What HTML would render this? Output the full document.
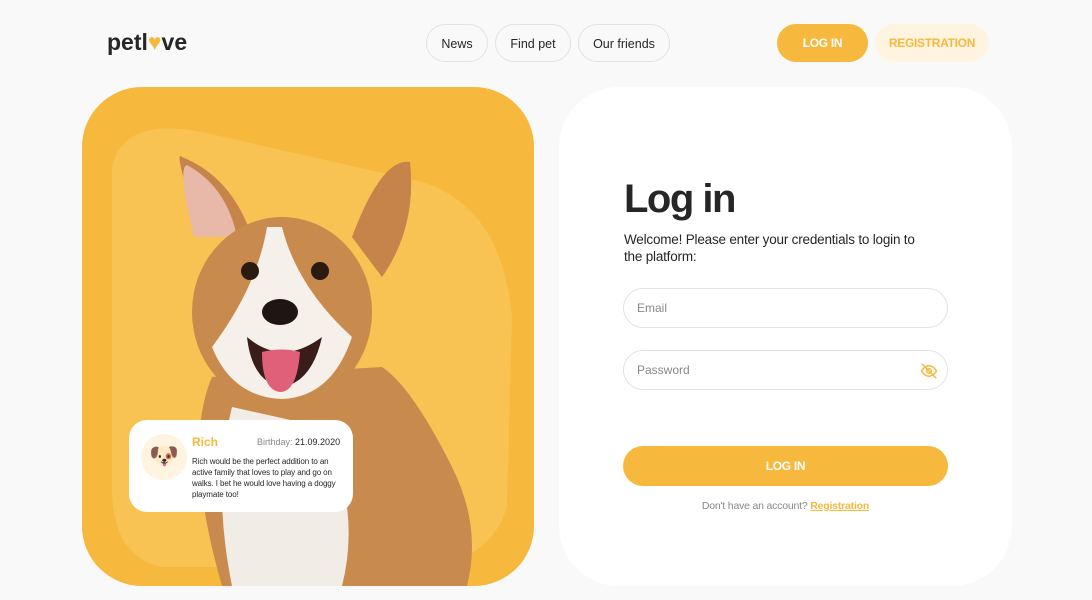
<!DOCTYPE html>
<html><head><meta charset="utf-8"><style>
*{box-sizing:border-box;margin:0;padding:0}
body{width:1092px;height:600px;background:#f9f9f9;font-family:"Liberation Sans",sans-serif;color:#262626;position:relative;overflow:hidden}
.logo{position:absolute;left:107px;top:29px;font-size:23px;font-weight:bold;letter-spacing:0px;color:#262626}
.logo span{color:#f6b83d}
.nav a{position:absolute;top:24px;height:38px;border:1px solid #e3e3e3;border-radius:30px;font-size:12.5px;line-height:38px;text-align:center;color:#262626;text-decoration:none}
.btn{position:absolute;top:24px;height:38px;border-radius:30px;font-size:12px;font-weight:bold;line-height:38px;text-align:center;letter-spacing:-0.3px}
.left{position:absolute;left:82px;top:87px;width:452px;height:499px;background:#f6b83d;border-radius:60px;overflow:hidden}
.right{position:absolute;left:559px;top:87px;width:453px;height:499px;background:#fff;border-radius:60px}
h1{position:absolute;left:65px;top:90px;font-size:40px;font-weight:bold;letter-spacing:-1.5px}
.sub{position:absolute;left:65px;top:144px;width:300px;font-size:13.5px;line-height:17px;letter-spacing:-0.2px}
.inp{position:absolute;left:64px;width:325px;height:40px;border:1px solid #e3e3e3;border-radius:30px;font-size:12px;color:#888;padding-left:13px;line-height:38px}
.lb{position:absolute;left:64px;top:359px;width:325px;height:40px;border-radius:30px;background:#f6b83d;color:#fff;font-size:12px;font-weight:bold;text-align:center;line-height:40px;letter-spacing:-0.3px}
.reg{position:absolute;left:0;width:453px;top:413px;text-align:center;font-size:10.5px;color:#888;letter-spacing:-0.2px}
.reg b{color:#f6b83d;text-decoration:underline}
.card{position:absolute;left:129px;top:420px;width:224px;height:92px;background:#fff;border-radius:18px}
</style></head><body>
<div class="logo">petl<span>♥</span>ve</div>
<div class="nav"><a style="left:426px;width:62px">News</a><a style="left:495px;width:76px">Find pet</a><a style="left:578px;width:92px">Our friends</a></div>
<div class="btn" style="left:777px;width:91px;background:#f6b83d;color:#fff">LOG IN</div>
<div class="btn" style="left:875px;width:114px;background:#fff4df;color:#f6b83d">REGISTRATION</div>
<div class="left">
<svg width="452" height="499" viewBox="0 0 452 499">
<path d="M30 80 Q40 30 120 45 L340 95 Q420 120 430 230 L425 420 Q410 470 350 480 L80 480 Q30 470 30 400 Z" fill="#f8c352"/>
<path d="M130 290 Q100 360 140 499 L385 499 Q400 440 370 380 Q330 300 300 280 Z" fill="#c98a4e"/>
<path d="M150 320 Q130 400 150 499 L260 499 Q280 420 240 340 Z" fill="#f1ece5"/>
<path d="M120 150 Q90 60 100 70 Q150 90 170 150 Z" fill="#c6844a"/>
<path d="M270 150 Q300 70 328 75 Q335 140 300 190 Z" fill="#c6844a"/>
<path d="M112 150 Q95 80 105 78 Q145 100 155 150 Z" fill="#e8b8a8"/>
<ellipse cx="200" cy="225" rx="90" ry="95" fill="#c98a4e"/>
<path d="M185 140 L200 140 Q215 200 270 250 Q250 310 200 312 Q150 310 130 260 Q175 200 185 140Z" fill="#f5f0ea"/>
<circle cx="168" cy="184" r="9" fill="#2a1a10"/><circle cx="238" cy="184" r="9" fill="#2a1a10"/>
<ellipse cx="198" cy="225" rx="18" ry="13" fill="#1e1612"/>
<path d="M165 250 Q200 280 240 250 Q230 295 200 300 Q170 295 165 250Z" fill="#3a1d1a"/>
<path d="M180 265 Q200 260 218 265 Q215 305 198 305 Q180 303 180 265Z" fill="#e0607a"/>
</svg>
</div>
<div class="card">
<div style="position:absolute;left:12px;top:14px;width:46px;height:46px;border-radius:50%;background:#fff4df;text-align:center;line-height:46px;font-size:24px">🐶</div>
<div style="position:absolute;left:63px;top:15px;font-size:12px;font-weight:bold;color:#f6b83d">Rich</div>
<div style="position:absolute;left:128px;top:17px;font-size:9px;color:#888">Birthday: <span style="color:#262626">21.09.2020</span></div>
<div style="position:absolute;left:63px;top:36px;width:150px;font-size:8px;line-height:11px;color:#262626;letter-spacing:-0.1px">Rich would be the perfect addition to an active family that loves to play and go on walks. I bet he would love having a doggy playmate too!</div>
</div>
<div class="right">
<h1>Log in</h1>
<div class="sub">Welcome! Please enter your credentials to login to the platform:</div>
<div class="inp" style="top:201px">Email</div>
<div class="inp" style="top:263px">Password
<svg style="position:absolute;right:9px;top:11px" width="18" height="18" viewBox="0 0 24 24" fill="none" stroke="#f6b83d" stroke-width="2" stroke-linecap="round"><path d="M2 12s4-7 10-7 10 7 10 7-4 7-10 7S2 12 2 12z"/><circle cx="12" cy="12" r="3"/><path d="M3 3l18 18"/></svg></div>
<div class="lb">LOG IN</div>
<div class="reg">Don't have an account? <b>Registration</b></div>
</div>
</body></html>
